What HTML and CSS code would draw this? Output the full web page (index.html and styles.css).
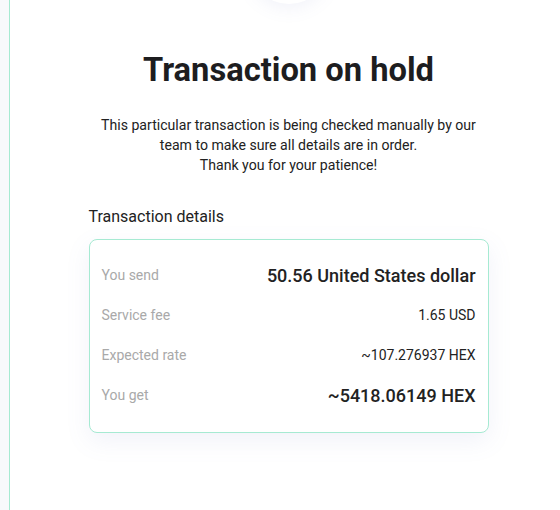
FILE: index.html
```html
<!DOCTYPE html>
<html>
<head>
<meta charset="utf-8">
<link rel="stylesheet" href="styles.css">
</head>
<body>
<div class="panel">
  <div class="content">
    <div class="status-circle"></div>
    <h1 class="title">Transaction on hold</h1>
    <p class="lead">This particular transaction is being checked manually by our team to make sure all details are in order.<br>Thank you for your patience!</p>
    <h2 class="section-title">Transaction details</h2>
    <div class="card">
      <div class="row">
        <span class="label">You send</span>
        <span class="value value-lg">50.56 United States dollar</span>
      </div>
      <div class="row">
        <span class="label">Service fee</span>
        <span class="value">1.65 USD</span>
      </div>
      <div class="row">
        <span class="label">Expected rate</span>
        <span class="value">~107.276937 HEX</span>
      </div>
      <div class="row">
        <span class="label">You get</span>
        <span class="value value-lg">~5418.06149 HEX</span>
      </div>
    </div>
  </div>
</div>
</body>
</html>
```

FILE: styles.css
```css
html, body {
  margin: 0;
  padding: 0;
  height: 100%;
  overflow: hidden;
}
body {
  background: #f8f9fc;
  font-family: Roboto, "Noto Sans", Arial, sans-serif;
  color: #212121;
}
.panel {
  margin-left: 9px;
  min-height: 100%;
  background: #ffffff;
  border-left: 1px solid #a6ead2;
  padding-left: 7px;
  box-sizing: border-box;
}
.content {
  width: 400px;
  margin: 0 auto;
  display: flex;
  flex-direction: column;
  align-items: center;
}
.status-circle {
  width: 80px;
  height: 80px;
  border-radius: 50%;
  background: #fff;
  margin-top: -76px;
  box-shadow: 0 4px 18px rgba(120, 130, 200, 0.10);
}
.title {
  margin: 46px 0 0;
  font-size: 32.7px;
  line-height: 40px;
  font-weight: 700;
  color: #1d1d1f;
  text-align: center;
}
.lead {
  margin: 25px 0 0;
  font-size: 14.1px;
  line-height: 20px;
  text-align: center;
  color: #222;
}
.section-title {
  align-self: stretch;
  margin: 32px 0 0;
  font-size: 16px;
  line-height: 20px;
  font-weight: 400;
  color: #222;
}
.card {
  align-self: stretch;
  margin-top: 12px;
  border: 1px solid #a6ead2;
  border-radius: 8px;
  padding: 15px 12px 17px;
  background: #fff;
  box-shadow: 0 8px 24px rgba(120, 130, 200, 0.10);
  display: flex;
  flex-direction: column;
}
.row {
  height: 40px;
  display: flex;
  align-items: center;
  justify-content: space-between;
}
.label {
  font-size: 14px;
  color: #a9a9a9;
}
.value {
  font-size: 14px;
  color: #222;
}
.value-lg {
  font-size: 18px;
  font-weight: 500;
}
```
